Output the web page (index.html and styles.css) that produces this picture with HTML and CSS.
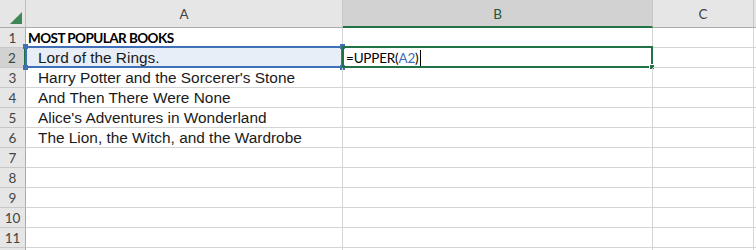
FILE: index.html
```html
<!DOCTYPE html>
<html>
<head>
<meta charset="utf-8">
<link rel="stylesheet" href="styles.css">
</head>
<body>
<div class="sheet">
  <div class="corner"><span class="tri"></span></div>
  <div class="colh">A</div>
  <div class="colh sel">B</div>
  <div class="colh">C</div>
  <div class="colh last"></div>

  <div class="rowh">1</div>
  <div class="cell title">MOST POPULAR BOOKS</div>
  <div class="cell"></div><div class="cell"></div><div class="cell last"></div>

  <div class="rowh sel">2</div>
  <div class="cell book ref">Lord of the Rings.<span class="refbox"><i class="h tl"></i><i class="h tr"></i><i class="h bl"></i><i class="h br"></i></span></div>
  <div class="cell formula">=UPPER(<span class="arg">A2</span>)<span class="caret"></span><span class="active"><i class="fill"></i></span></div>
  <div class="cell"></div><div class="cell last"></div>

  <div class="rowh">3</div>
  <div class="cell book">Harry Potter and the Sorcerer's Stone</div>
  <div class="cell"></div><div class="cell"></div><div class="cell last"></div>

  <div class="rowh">4</div>
  <div class="cell book">And Then There Were None</div>
  <div class="cell"></div><div class="cell"></div><div class="cell last"></div>

  <div class="rowh">5</div>
  <div class="cell book">Alice's Adventures in Wonderland</div>
  <div class="cell"></div><div class="cell"></div><div class="cell last"></div>

  <div class="rowh">6</div>
  <div class="cell book">The Lion, the Witch, and the Wardrobe</div>
  <div class="cell"></div><div class="cell"></div><div class="cell last"></div>

  <div class="rowh">7</div>
  <div class="cell"></div><div class="cell"></div><div class="cell"></div><div class="cell last"></div>
  <div class="rowh">8</div>
  <div class="cell"></div><div class="cell"></div><div class="cell"></div><div class="cell last"></div>
  <div class="rowh">9</div>
  <div class="cell"></div><div class="cell"></div><div class="cell"></div><div class="cell last"></div>
  <div class="rowh">10</div>
  <div class="cell"></div><div class="cell"></div><div class="cell"></div><div class="cell last"></div>
  <div class="rowh">11</div>
  <div class="cell"></div><div class="cell"></div><div class="cell"></div><div class="cell last"></div>
  <div class="rowh"></div>
  <div class="cell"></div><div class="cell"></div><div class="cell"></div><div class="cell last"></div>
</div>
</body>
</html>
```
FILE: styles.css
```css
* { box-sizing: border-box; }
html, body { margin: 0; padding: 0; background: #fff; overflow: hidden; }
.sheet {
  display: grid;
  grid-template-columns: 26px 317px 310px 101px 1fr;
  grid-template-rows: 28px repeat(12, 20px);
  width: 756px;
  height: 250px;
  overflow: hidden;
  font-family: "Lato", "Liberation Sans", sans-serif;
}
.corner {
  background: #e6e6e6;
  border-right: 1px solid #bdbdbd;
  border-bottom: 1px solid #ababab;
  position: relative;
}
.tri {
  position: absolute;
  right: 3px;
  bottom: 3px;
  width: 0; height: 0;
  border-left: 12px solid transparent;
  border-bottom: 12px solid #3d8656;
}
.colh {
  background: #e6e6e6;
  border-right: 1px solid #c8c8c8;
  border-bottom: 1px solid #ababab;
  display: flex;
  align-items: center;
  justify-content: center;
  font-size: 13.5px;
  color: #444;
  padding-top: 1px;
}
.colh.sel {
  background: #d2d2d2;
  border-bottom: 2px solid #217346;
  color: #24553a;
}
.colh.last { border-right: none; }
.rowh {
  background: #e6e6e6;
  border-right: 1px solid #ababab;
  border-bottom: 1px solid #c8c8c8;
  display: flex;
  align-items: center;
  justify-content: center;
  font-size: 13.5px;
  color: #444;
  padding-top: 1px;
}
.rowh.sel {
  background: #d2d2d2;
  border-right: 2px solid #217346;
  color: #3a4a40;
}
.cell {
  border-right: 1px solid #d4d4d4;
  border-bottom: 1px solid #d4d4d4;
  position: relative;
  display: flex;
  align-items: flex-end;
  white-space: nowrap;
  color: #000;
}
.cell.last { border-right: none; }
.title {
  font-weight: 700;
  font-size: 13.5px;
  padding-left: 2px;
  padding-bottom: 1px;
  letter-spacing: -0.55px;
}
.book {
  font-family: "Liberation Sans", Arial, sans-serif;
  font-size: 15.4px;
  padding-left: 12px;
  padding-bottom: 0;
  color: #1a1a1a;
}
.ref { background: #e8eef7; }
.refbox {
  position: absolute;
  top: -2px; left: -1px; right: -1px; bottom: -1px;
  border: 2px solid #3f6fb5;
}
.h {
  position: absolute;
  width: 5px; height: 5px;
  background: #3f6fb5;
}
.h.tl { top: -4px; left: -4px; }
.h.tr { top: -4px; right: -4px; }
.h.bl { bottom: -4px; left: -4px; }
.h.br { bottom: -4px; right: -4px; }
.formula {
  font-size: 13.5px;
  padding-left: 3px;
  padding-bottom: 1px;
  letter-spacing: -0.2px;
}
.arg { color: #3f6fb5; }
.caret {
  display: inline-block;
  width: 1px;
  height: 16px;
  background: #000;
  margin-left: 2px;
}
.active {
  position: absolute;
  top: -2px; left: -1px; right: -1px; bottom: -1px;
  border: 2px solid #217346;
}
.fill {
  position: absolute;
  right: -4px; bottom: -4px;
  width: 6px; height: 6px;
  background: #217346;
  border: 1px solid #fff;
}
```
